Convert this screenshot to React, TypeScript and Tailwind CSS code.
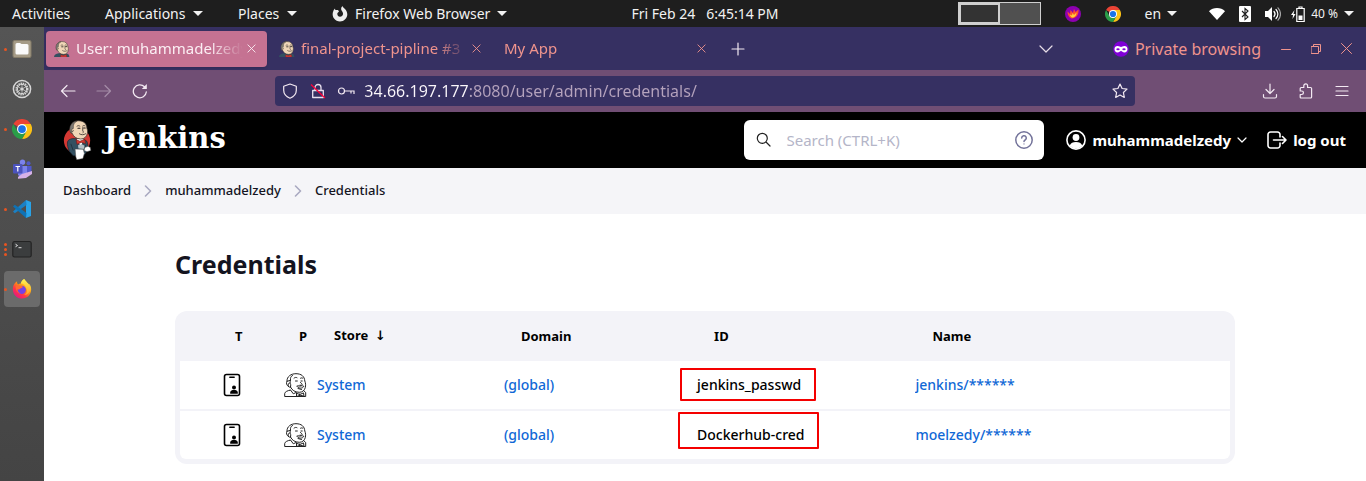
import React from "react";

type IconProps = { className?: string };

function Caret({ className = "" }: IconProps) {
  return (
    <svg className={`h-[5px] w-[10px] shrink-0 ${className}`} viewBox="0 0 10 5" fill="currentColor" aria-hidden="true">
      <path d="M0 0h10L5 5z" />
    </svg>
  );
}

function Line({ d, className = "size-4", box = "0 0 16 16", sw = 1.2 }: { d: string; className?: string; box?: string; sw?: number }) {
  return (
    <svg className={`shrink-0 ${className}`} viewBox={box} fill="none" stroke="currentColor" strokeWidth={sw} strokeLinecap="round" strokeLinejoin="round" aria-hidden="true">
      <path d={d} />
    </svg>
  );
}

function ChromeLogo({ className = "size-5" }: IconProps) {
  return (
    <svg className={`shrink-0 ${className}`} viewBox="0 0 48 48" aria-hidden="true">
      <path d="M24 24 3.2 12A24 24 0 0 1 44.8 12z" fill="#ea4335" />
      <path d="M24 12h20.8A24 24 0 0 1 24 48l10.4-18z" fill="#fbc116" />
      <path d="M13.6 30 3.2 12A24 24 0 0 0 24 48l10.4-18z" fill="#2a9d48" />
      <circle cx="24" cy="24" r="12" fill="#fff" />
      <circle cx="24" cy="24" r="9.3" fill="#1a73e8" />
    </svg>
  );
}

function FirefoxLogo({ className = "size-5" }: IconProps) {
  return (
    <svg className={`shrink-0 ${className}`} viewBox="0 0 48 48" aria-hidden="true">
      <defs>
        <linearGradient id="fx-body" x1="0.85" y1="0.1" x2="0.2" y2="0.95">
          <stop offset="0" stopColor="#fff44f" />
          <stop offset="0.4" stopColor="#ff980e" />
          <stop offset="0.7" stopColor="#ff3647" />
          <stop offset="1" stopColor="#e31587" />
        </linearGradient>
        <linearGradient id="fx-tail" x1="0" y1="0" x2="0" y2="1">
          <stop offset="0" stopColor="#fff44f" />
          <stop offset="1" stopColor="#ffa02e" />
        </linearGradient>
      </defs>
      <path d="M44.5 17c-1-2.500-3.200-5.200-4.900-6.100 1.400 2.700 2.200 5.400 2.500 7.400C39.300 11.400 34.600 8.600 30.700 2.500L29.200 0c-4.900 2.800-7.500 7.300-8 11-2.400.1-4.700.8-6.700 2-2-1.600-2.800-4.400-2.200-7.500-3 1.500-5.200 4-6.500 6C2.500 16 1.800 22 2 25.500 2.600 37.500 12.300 47 24.300 47c12 0 21.700-9.700 21.700-21.700 0-3-.5-5.800-1.500-8.300z" fill="url(#fx-body)" />
      <path d="M29.200 0c-4.900 2.800-7.500 7.300-8 11 6 .2 12 4 12.800 11 4 5 2 14-6 16 9 1 16-6 16-16 0-9-9-14-14.800-22z" fill="url(#fx-tail)" />
      <circle cx="23.500" cy="26" r="10" fill="#7542e5" />
      <path d="M9 17c5-3 9-2 12 0 3 0 5 1 5 2-1 2-5 3-6 4-2 3-5 3-7 1-1 6 5 11 11 11-9 1-16-6-15-18z" fill="#ff6a32" />
    </svg>
  );
}

function MascotHead() {
  return (
    <>
      <path d="M8 12C6.500 4.500 10.500.8 16 .8c5.500 0 8.700 3 8.900 8 .6 1.500.9 3.200.5 5-.6 3.500-3.200 6.200-7 6.200-4.500 0-8-3-8.900-6-1.500.2-2.200-1-1.500-2z" fill="#f0d6b7" stroke="#3b342f" strokeWidth=".8" />
      <path d="M8.500 14C5 10.500 7 2 14.500 1c-1.300 1.200-3 1.700-3.700 4.500-.3 1.500.3 2.500-.5 4-1.300-.4-1.800.5-1.500 2z" fill="#7d7873" stroke="#3b342f" strokeWidth=".5" />
      <path d="M14.500 6.500c1-.8 2-.8 3 0M20.500 6.300c.7-.6 1.600-.6 2.300-.2M20.500 8v3.500c.8 1 1.300 1.300.3 1.800M17 14.500c2.200 1.500 4.500 1.200 6.500 0M10.500 11l-.8 1.500" fill="none" stroke="#3b342f" strokeWidth=".9" strokeLinecap="round" />
      <path d="M15.500 8.700h2M21.500 8.400h1.600" stroke="#231f20" strokeWidth="1.200" strokeLinecap="round" />
    </>
  );
}

function Mascot({ className = "" }: IconProps) {
  return (
    <svg className={`shrink-0 ${className}`} viewBox="4 0 24 24" aria-hidden="true">
      <path d="M4 24c0-3 3-4.500 7-5.500h11c3 .5 5 2 5 5.500z" fill="#335061" />
      <MascotHead />
      <path d="M14 20.500l4 1.300 4.500-1.500.8 3.700H14z" fill="#d33833" stroke="#7a1f1c" strokeWidth=".5" />
    </svg>
  );
}

function MascotLogo({ className = "" }: IconProps) {
  return (
    <svg className={`shrink-0 ${className}`} viewBox="0 0 30 42" aria-hidden="true">
      <circle cx="14.500" cy="21.500" r="13.800" fill="#d33833" />
      <path d="M10 19.500c-3 .5-5 1.500-5.500 3.500-.5 3 .5 7 2 10l4 4.500h11l4-5.500c1-3 .5-8-1-10l-3.500-2z" fill="#335061" stroke="#1a2630" strokeWidth=".7" />
      <path d="M14 20l4.500 8L21.500 20z" fill="#fff" />
      <path d="M8 25l2.500 7M24 26l-2 4" stroke="#1a2630" strokeWidth=".7" />
      <MascotHead />
      <path d="M13.500 20.500l4 1.800 5-2 1 4.500-4.500-1.300-4.500 2z" fill="#d33833" stroke="#6b1815" strokeWidth=".6" />
      <path d="M15.500 26.500l4-1 3 1.500-1 3.500-5.500-.5z" fill="#b5bfc6" />
      <path d="M22.500 29l3.500-1.500 2.500 1.500.5 3-4 1.300-3-1.300z" fill="#fff" stroke="#444" strokeWidth=".5" />
      <path d="M12.500 30.500l8.500.3 1.200 4.200-1.500 5.500-6.500 1.200-1-3z" fill="#fff" stroke="#444" strokeWidth=".5" />
    </svg>
  );
}

function MascotOutline() {
  return (
    <svg className="size-6" viewBox="0 0 24 24" fill="none" stroke="#222" strokeWidth="1" strokeLinecap="round" strokeLinejoin="round" aria-hidden="true">
      <path d="M4.500 13.500C2.500 12.500 2 10 3 8.300 2.800 3.500 7 .7 12 .7c5.500 0 8.500 2.800 8.800 7.300.9 2 1 4.500.5 6.500-.7 3-3 4.800-6 4.800-4.300 0-7.300-2.200-8.800-5.300-.7.300-1.500.2-2-.5z" />
      <path d="M8.500 2.500C6.500 3.500 6.300 5.300 6.500 7c.1 1-.6 1.700-.5 2.700M4.500 13.500c-.8-1.800-.2-3.500 1.300-3.500 1 .4 1.200 2.600.7 4M3 8.300l2.800-.8M10 5.200c.9-.9 2-1.100 3-.5M16.500 5.200c.8-.5 1.500-.4 2.200 0" />
      <path d="M11.500 8h1.800M17 8h1.200M16.500 9.500c1.500 1.200 2.300 2 1 2.800l-1.500-.1M13 13c1.500-.6 2.700.4 4-.1 1-.4 2 .1 2.800.4-1 2.300-5 2.500-6.500.4M14 15.500l3.500 1" />
      <path d="M6.200 17.200C3.500 17.500 1 18.800.7 20.500v3h21v-4l-1.800-1.700M6.500 17l2.800 3.800 2.700-1.300M12.500 20v3M12.500 20.300l3.300 1.200 3.700-1.600.5 3.300-4-1-3 1.200M15.500 21v1.500" />
    </svg>
  );
}

function CredentialIcon() {
  return (
    <svg className="size-6" viewBox="0 0 24 24" aria-hidden="true">
      <rect x="4.500" y="1.500" width="15" height="21" rx="2" fill="none" stroke="#000" strokeWidth="1.600" />
      <path d="M9.800 4.200h4.400" stroke="#000" strokeWidth="1.400" strokeLinecap="round" />
      <circle cx="14" cy="14.500" r="2" fill="#000" />
      <path d="M10.200 20.700v-1.200c0-1.800 2-2.400 3.800-2.400s3.800.6 3.800 2.400v1.200z" fill="#000" />
    </svg>
  );
}

const dock: { label: string; dots: number; active?: boolean; icon: React.ReactNode }[] = [
  {
    label: "Files",
    dots: 1,
    icon: (
      <svg className="size-5" viewBox="0 0 20 20" aria-hidden="true">
        <rect x="1" y="1.500" width="18" height="17" rx="1.500" fill="#a59b87" stroke="#857c69" />
        <path d="M3.500 5.500a1.500 1.500 0 0 1 1.500-1.500h3l1.500 1h5.500a1.500 1.500 0 0 1 1.500 1.500V14a1.500 1.500 0 0 1-1.500 1.500H5A1.500 1.500 0 0 1 3.500 14z" fill="#fafafa" />
      </svg>
    ),
  },
  {
    label: "Settings",
    dots: 0,
    icon: (
      <svg className="size-5" viewBox="0 0 20 20" fill="none" stroke="#d6d6d6" aria-hidden="true">
        <circle cx="10" cy="10" r="8.600" strokeWidth="1.500" />
        <circle cx="10" cy="10" r="5.600" strokeWidth="1.800" strokeDasharray="1.500 0.700" />
        <circle cx="10" cy="10" r="4.600" strokeWidth="1" />
        <circle cx="10" cy="10" r="1.600" fill="#d6d6d6" stroke="none" />
        <path d="M10 5v10M5.700 7.500l8.600 5M5.700 12.500l8.600-5" strokeWidth=".7" />
      </svg>
    ),
  },
  { label: "Chrome", dots: 1, icon: <ChromeLogo /> },
  {
    label: "Teams",
    dots: 0,
    icon: (
      <svg className="size-5" viewBox="0 0 20 20" aria-hidden="true">
        <circle cx="10.500" cy="3.200" r="2.700" fill="#7b83eb" />
        <circle cx="16.500" cy="4.200" r="2" fill="#5059c9" />
        <path d="M13 7h6.500v6a3.500 3.500 0 0 1-6.500 1z" fill="#5059c9" />
        <path d="M6 7h9v7a5 5 0 0 1-9 2z" fill="#7b83eb" />
        <rect x="1" y="5" width="9.500" height="9.500" rx="1" fill="#4b53bc" />
        <path d="M3.500 7.500h4.500M5.800 7.500v5" stroke="#fff" strokeWidth="1.200" />
        <path d="m6 18 4-3 10-3v3l-6 4-8 .8z" fill="#d6b1e8" />
      </svg>
    ),
  },
  {
    label: "Visual Studio Code",
    dots: 1,
    icon: (
      <svg className="size-5" viewBox="0 0 20 20" aria-hidden="true">
        <path d="m14 1 5 2v14l-5 2z" fill="#29a3e8" />
        <path d="M14 1 1 12.500l1.800 1.700L14.500 6z" fill="#1b80c4" />
        <path d="M14 19 1 7.500l1.800-1.700L14.500 14z" fill="#0f72b5" />
      </svg>
    ),
  },
  {
    label: "Terminal",
    dots: 3,
    icon: (
      <svg className="size-5" viewBox="0 0 20 20" aria-hidden="true">
        <rect x=".8" y="2.500" width="18.400" height="15.500" rx="1.800" fill="#3b3d3e" stroke="#232323" strokeWidth="1.200" />
        <path d="m3.500 5.200 2 1.300-2 1.300M6.500 8.700h3" stroke="#eee" fill="none" strokeWidth=".9" />
      </svg>
    ),
  },
  { label: "Firefox", dots: 1, active: true, icon: <FirefoxLogo /> },
];

function Dock() {
  return (
    <nav aria-label="Dock" className="flex w-11 shrink-0 flex-col gap-1 bg-linear-to-b from-[#555555] to-[#444444] px-1 pt-1">
      {dock.map((item) => (
        <button key={item.label} aria-label={item.label} className={`relative flex size-9 items-center justify-center rounded-sm ${item.active ? "bg-[#6b6b6b]" : ""}`}>
          <span className="absolute inset-y-0 left-0 flex flex-col justify-center gap-[2px]">
            {Array.from({ length: item.dots }, (_, i) => (
              <span key={i} className="size-[3px] rounded-full bg-[#e95420]" />
            ))}
          </span>
          {item.icon}
        </button>
      ))}
    </nav>
  );
}

function SystemBar() {
  return (
    <header className="grid h-[27px] grid-cols-[1fr_auto_1fr] items-center bg-[#1e1e1e] px-3 text-sm whitespace-nowrap text-[#f2f2f2]">
      <div className="flex items-center">
        <button className="w-[93px] text-left">Activities</button>
        <button className="flex w-[133px] items-center gap-2">Applications <Caret /></button>
        <button className="flex w-[94px] items-center gap-2">Places <Caret /></button>
        <button className="flex items-center gap-[7px]">
          <svg className="size-4" viewBox="0 0 16 16" aria-hidden="true">
            <path d="M8 15.500A7.300 7.300 0 0 1 1 6c.3-1.400 1-2.600 2-3.500l.3 1.500L6 4l1 1.500L5.500 7c-.7 2 .7 3.700 2.500 3.700C10 10.700 11.200 9 11 7.300 10.800 5.500 9.500 5 9.200 3.500 9 2 9.500 1 10.500 0c.3 2 4.800 3.500 4.800 8.300 0 4-3.300 7.200-7.300 7.200z" fill="#eee" />
          </svg>
          Firefox Web Browser <Caret />
        </button>
      </div>
      <div className="ml-11">Fri Feb 24&nbsp;&nbsp; 6:45:14 PM</div>
      <div className="flex items-center justify-end">
        <div className="mr-6 flex h-[23px] w-[83px] border border-[#cfcfcf] bg-[#505050]">
          <span className="h-full w-[41px] border-2 border-[#d0d0d0] bg-[#333333]" />
        </div>
        <svg className="mr-6 size-4" viewBox="0 0 16 16" aria-hidden="true">
          <circle cx="8" cy="8" r="8" fill="#8d00b0" />
          <path d="M13.500 3.500C14 9 11 12.500 6.500 12.500 3.500 11 2.500 8 2.500 5.500L5 8l.5-4 2.500 3 1-4 1.500 3z" fill="#ff4f2e" />
          <path d="M11.500 6.500c0 3-2 5-4.500 5-1.500-1-2-2-2-3l2 1 .5-2.500 1.500 2z" fill="#ffd03a" />
        </svg>
        <ChromeLogo className="mr-6 size-4" />
        <button className="mr-8 flex items-center gap-[6px]">en <Caret /></button>
        <svg className="mr-[14px] h-3 w-4" viewBox="0 0 16 12" aria-label="Wi-Fi">
          <path d="M0 3.200C4-1 12-1 16 3.200L8 12z" fill="#fff" />
        </svg>
        <svg className="mr-[14px] h-4 w-3" viewBox="0 0 12 16" aria-label="Bluetooth">
          <rect width="12" height="16" rx="1" fill="#fff" />
          <path d="m3 5 6 6-3 2.500v-11L9 5l-6 6" fill="none" stroke="#1e1e1e" strokeWidth="1.100" />
        </svg>
        <svg className="mr-[10px] size-4" viewBox="0 0 16 16" fill="none" stroke="#fff" strokeWidth="1.200" strokeLinecap="round" aria-label="Volume">
          <path d="M0 5h3l4-4v14l-4-4H0z" fill="#fff" stroke="none" />
          <path d="M9 5.500c1.300 1.500 1.300 3.500 0 5M11 3.500c2.500 2.600 2.500 6.400 0 9" />
          <path d="M13 1.800c3.300 3.700 3.300 8.700 0 12.400" strokeOpacity=".6" />
        </svg>
        <button className="flex items-center gap-[6px] text-xs">
          <svg className="h-4 w-[14px]" viewBox="0 0 14 16" aria-label="Battery charging">
            <path d="M3.500 4 0 9h2l-.5 4L4.500 8H2.500z" fill="#fff" />
            <path d="M5.800 2.500h7.400v13H5.800zM8 2.500V1h3v1.500" fill="none" stroke="#fff" strokeWidth="1.200" />
            <path d="M7.500 9.500h4v4.500h-4z" fill="#fff" />
          </svg>
          <span>40 %</span>
          <Caret />
        </button>
      </div>
    </header>
  );
}

function Tab({ title, active = false, favicon = false }: { title: string; active?: boolean; favicon?: boolean }) {
  return (
    <div className={`flex h-9 w-[221px] items-center rounded-sm px-2 ${active ? "bg-[#c57292] text-[#fbeef3] shadow" : "text-[#f0948d]"}`}>
      {favicon && <Mascot className="mr-[6px] size-4" />}
      <button className="min-w-0 flex-1 mask-r-from-80% text-left whitespace-nowrap">{title}</button>
      <button aria-label={`Close ${title}`} className="flex size-4 items-center justify-center">
        <Line d="M1 1l8 8M9 1l-8 8" box="0 0 10 10" className="size-[9px]" sw={1} />
      </button>
    </div>
  );
}

function TabStrip() {
  return (
    <div className="flex h-[43px] items-center bg-[#363062] pr-[14px] pl-[2px] text-[15px] text-[#f0948d]">
      <div className="flex gap-1">
        <Tab title="User: muhammadelzedy" active favicon />
        <Tab title="final-project-pipline #3" favicon />
        <Tab title="My App" />
      </div>
      <button aria-label="New tab" className="ml-[14px] text-[#f3e9f2]">
        <Line d="M7 1v12M1 7h12" box="0 0 14 14" className="size-[14px]" />
      </button>
      <button aria-label="List all tabs" className="mr-[60px] ml-auto text-[#e8dde8]">
        <Line d="M1 1l6 6 6-6" box="0 0 14 8" className="h-2 w-[14px]" />
      </button>
      <div className="mr-5 flex items-center gap-[6px] text-base whitespace-nowrap">
        <svg className="size-4" viewBox="0 0 16 16" aria-hidden="true">
          <circle cx="8" cy="8" r="7.800" fill="#8000d7" />
          <path d="M1.500 8c0-2 1.300-3 3-3C6.500 5 7 6 8 6s1.500-1 3.500-1c1.700 0 3 1 3 3s-1.300 3.500-3 3.500C9.700 11.500 9 10 8 10s-1.700 1.500-3.500 1.500c-1.700 0-3-1.500-3-3.500z" fill="#fff" />
          <ellipse cx="5" cy="8.200" rx="1.700" ry="1" fill="#8000d7" />
          <ellipse cx="11" cy="8.200" rx="1.700" ry="1" fill="#8000d7" />
        </svg>
        Private browsing
      </div>
      <button aria-label="Minimize" className="mr-5"><Line d="M.5 5.500h9" box="0 0 10 10" className="size-[10px]" sw={1} /></button>
      <button aria-label="Restore" className="mr-5"><Line d="M.5 2.500h7v7h-7zM2.500 2.500v-2h7v7h-2" box="0 0 10 10" className="size-[10px]" sw={1} /></button>
      <button aria-label="Close window"><Line d="M.5.500l10 10M10.500.500l-10 10" box="0 0 11 11" className="size-[11px]" sw={1} /></button>
    </div>
  );
}

function Toolbar() {
  return (
    <div className="flex h-[42px] items-center bg-[#704e74] text-[#f3e9f2]">
      <div className="flex flex-1 gap-5 pl-4">
        <button aria-label="Back"><Line d="M15 8H1.500M7 2.500 1.500 8 7 13.500" /></button>
        <button aria-label="Forward" className="opacity-40"><Line d="M1 8h13.500M9 2.500 14.500 8 9 13.500" /></button>
        <button aria-label="Reload">
          <svg className="size-4" viewBox="0 0 16 16" fill="none" stroke="currentColor" strokeWidth="1.300" strokeLinecap="round" aria-hidden="true">
            <path d="M14.300 9A6.500 6.500 0 1 1 12.500 3.800" />
            <path d="M14.800 1v5h-5z" fill="currentColor" stroke="none" />
          </svg>
        </button>
      </div>
      <div className="flex h-[30px] w-[65%] items-center rounded-sm bg-[#363062] px-[7px]">
        <Line d="M8 1 1.700 3.300v4c0 3.500 2.500 6.400 6.300 7.900 3.800-1.500 6.300-4.400 6.300-7.900v-4z" />
        <svg className="ml-3 size-4 shrink-0" viewBox="0 0 16 16" fill="none" strokeWidth="1.300" aria-label="Not secure">
          <path d="M2.700 7.500h10.600v7H2.700zM5 7.500v-3a3 3 0 0 1 6 0v3" stroke="#e8dfee" strokeLinejoin="round" />
          <path d="m1 1.500 14 13.500" stroke="#ff0039" strokeWidth="1.300" />
        </svg>
        <svg className="ml-[11px] h-4 w-[18px] shrink-0" viewBox="0 0 18 16" fill="none" stroke="currentColor" strokeWidth="1.200" aria-hidden="true">
          <circle cx="4.500" cy="8" r="3" />
          <path d="M7.500 8h9.500v3M14 8v2.500" />
        </svg>
        <input
          aria-label="Address"
          readOnly
          value="34.66.197.177:8080/user/admin/credentials/"
          className="ml-[9px] min-w-0 flex-1 bg-linear-to-r from-[#fbf7fb] from-[106px] to-[#b5a3bd] to-[106px] bg-clip-text text-base text-transparent outline-none"
        />
        <button aria-label="Bookmark this page"><Line d="m8 1 2.100 4.500 4.900.6-3.600 3.400.9 4.900L8 12l-4.300 2.400.9-4.900L1 6.100l4.900-.6z" /></button>
      </div>
      <div className="flex flex-1 justify-end gap-5 pr-4">
        <button aria-label="Downloads"><Line d="M8 1v9M4 6.500l4 4 4-4M1.500 11.500v2a1.500 1.500 0 0 0 1.500 1.500h10a1.500 1.500 0 0 0 1.500-1.500v-2" /></button>
        <button aria-label="Extensions"><Line d="M2.200 5.500c0-.6.400-1 1-1h2.600V2.800a1.900 1.900 0 0 1 3.800 0v1.700h3c.6 0 1 .4 1 1v8.500c0 .6-.4 1-1 1H3.200c-.6 0-1-.4-1-1v-2.500h1.500a1.700 1.700 0 0 0 0-3.500H2.200z" /></button>
        <button aria-label="Menu"><Line d="M2 3.500h12M2 8h12M2 12.500h12" /></button>
      </div>
    </div>
  );
}

function JenkinsHeader() {
  return (
    <header className="flex h-14 items-center bg-black pr-5 pl-[19px] text-[15px] font-bold text-white">
      <a href="#home" className="flex items-center gap-3">
        <MascotLogo className="h-10 w-[29px]" />
        <span className="pb-1 font-['DejaVu_Serif',serif] text-[29px] leading-8">Jenkins</span>
      </a>
      <label className="mr-[22px] ml-auto flex h-10 w-[300px] items-center rounded-md bg-white px-[11px] font-normal">
        <Line d="M15 15 11 11M12.300 7.300a5 5 0 1 1-10 0 5 5 0 0 1 10 0z" box="0 0 18 18" className="size-[18px] text-[#222]" />
        <input aria-label="Search" placeholder="Search (CTRL+K)" className="ml-[13px] min-w-0 flex-1 text-[15px] text-black outline-none placeholder:text-[#b4b5c8]" />
        <svg className="size-[18px] shrink-0 text-[#73739a]" viewBox="0 0 18 18" fill="none" stroke="currentColor" strokeWidth="1.500" aria-hidden="true">
          <circle cx="9" cy="9" r="8.200" />
          <path d="M6.700 7a2.300 2.300 0 1 1 3.400 2c-.8.400-1.100.8-1.100 1.600" strokeLinecap="round" />
          <circle cx="9" cy="12.900" r=".6" fill="currentColor" stroke="none" />
        </svg>
      </label>
      <button className="flex items-center gap-[6px]">
        <svg className="size-5" viewBox="0 0 20 20" aria-hidden="true">
          <circle cx="10" cy="10" r="9.100" fill="none" stroke="#fff" strokeWidth="1.600" />
          <circle cx="10" cy="7.500" r="3.400" fill="#fff" />
          <path d="M3.700 15.800C4.500 13 7 12 10 12s5.500 1 6.300 3.800A8.600 8.600 0 0 1 10 18.500a8.600 8.600 0 0 1-6.300-2.700z" fill="#fff" />
        </svg>
        muhammadelzedy
        <Line d="M1 1l4 4 4-4" box="0 0 10 6" className="h-[6px] w-[10px]" />
      </button>
      <a href="#logout" className="ml-5 flex items-center gap-[6px]">
        <Line d="M13 6V3.500A2.500 2.500 0 0 0 10.500 1h-7A2.500 2.500 0 0 0 1 3.500v11A2.500 2.500 0 0 0 3.500 17h7a2.500 2.500 0 0 0 2.500-2.500V12M6.500 9H19M15.500 5.500 19 9l-3.500 3.500" box="0 0 20 18" className="h-[18px] w-5" sw={1.6} />
        log out
      </a>
    </header>
  );
}

function Breadcrumbs() {
  const items = ["Dashboard", "muhammadelzedy", "Credentials"];
  return (
    <nav aria-label="Breadcrumb" className="h-[46px] bg-[#f5f5f8] pl-[19px] text-[13px] font-medium text-[#14141f]">
      <ol className="flex h-full items-center gap-[13px]">
        {items.map((item, i) => (
          <li key={item} className="flex items-center gap-[13px]">
            {i > 0 && <Line d="M1.500 1l5 5-5 5" box="0 0 8 12" className="h-3 w-2 text-[#a9a9c0]" sw={1.6} />}
            <a href={`#${item}`}>{item}</a>
          </li>
        ))}
      </ol>
    </nav>
  );
}

const rows = [
  { id: "jenkins_passwd", name: "jenkins/******", mark: "top-[7px] -left-[17px] h-[33px] w-[136px]" },
  { id: "Dockerhub-cred", name: "moelzedy/******", mark: "top-px -left-[19px] h-[37px] w-[141px]" },
];

function CredentialsTable() {
  return (
    <div className="rounded-xl bg-[#f3f3f8] px-[5px] pb-[5px]">
      <table className="w-full table-fixed border-separate border-spacing-0 text-left text-sm">
        <thead>
          <tr className="h-[50px] text-[13px] font-bold text-black">
            <th className="w-[104px] pl-[55px]">T</th>
            <th className="w-[33px] pl-[15px]">P</th>
            <th className="w-[17.8%] pl-[17px]">
              Store&nbsp; <span className="font-['DejaVu_Sans',sans-serif]">↓</span>
            </th>
            <th className="w-[18.4%] pl-[17px]">Domain</th>
            <th className="w-[20.8%] pl-[17px]">ID</th>
            <th className="pl-[17px]">Name</th>
          </tr>
        </thead>
        <tbody className="font-medium text-[#1068d6]">
          {rows.map((row, i) => {
            const line = i === 0 ? "h-[50px] border-b-2 border-[#f3f3f8]" : "h-12";
            return (
              <tr key={row.id}>
                <td className={`bg-white pl-10 ${line} ${i === 1 ? "rounded-bl-md" : ""}`}><CredentialIcon /></td>
                <td className={`bg-white ${line}`}><MascotOutline /></td>
                <td className={`bg-white ${line}`}><a href="#system">System</a></td>
                <td className={`bg-white ${line}`}><a href="#global">(global)</a></td>
                <td className={`relative bg-white text-black ${line}`}>
                  {row.id}
                  <span className={`absolute rounded-[1px] border-2 border-[#f40000] ${row.mark}`} />
                </td>
                <td className={`bg-white ${line} ${i === 1 ? "rounded-br-md" : ""}`}><a href={`#${row.id}`}>{row.name}</a></td>
              </tr>
            );
          })}
        </tbody>
      </table>
    </div>
  );
}

export default function App() {
  return (
    <div className="flex min-h-screen flex-col bg-white font-['Noto_Sans',sans-serif]">
      <SystemBar />
      <div className="flex flex-1">
        <Dock />
        <div className="min-w-0 flex-1">
          <TabStrip />
          <Toolbar />
          <JenkinsHeader />
          <Breadcrumbs />
          <main className="mx-auto max-w-[1060px] pt-[34px]">
            <h1 className="mb-[31px] text-[25px] leading-8 font-bold text-[#14141f]">Credentials</h1>
            <CredentialsTable />
          </main>
        </div>
      </div>
    </div>
  );
}
